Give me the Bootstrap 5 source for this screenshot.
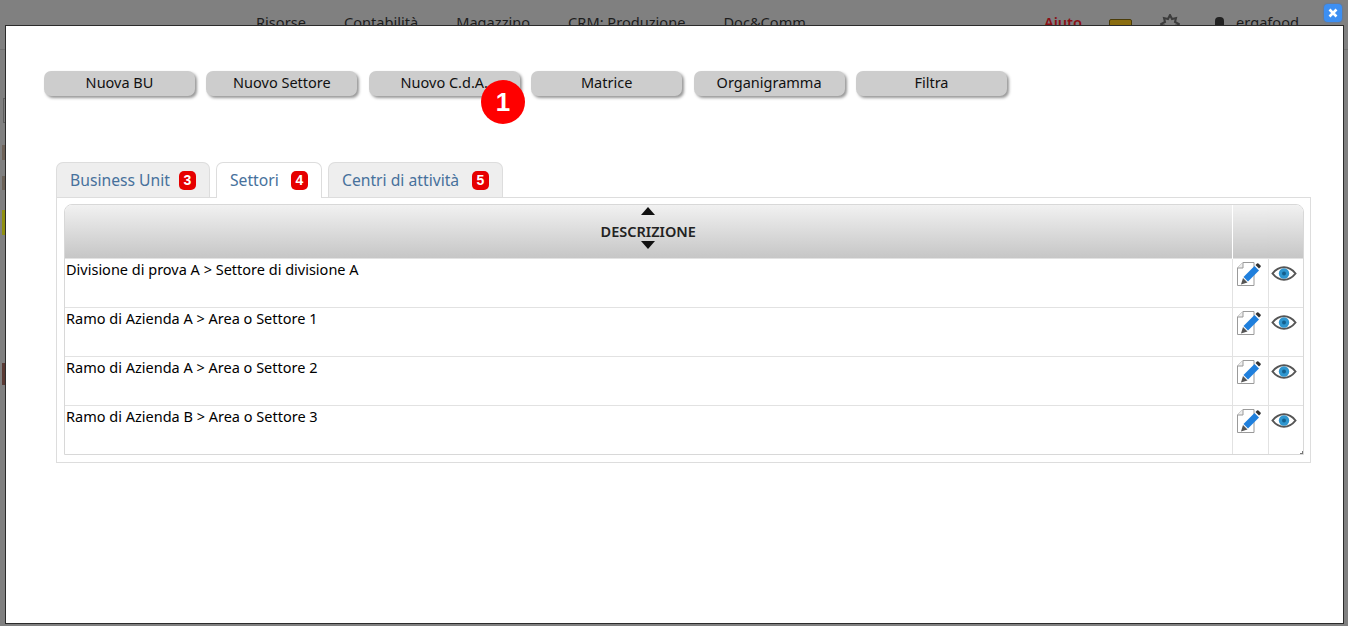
<!doctype html>
<html lang="it">
<head>
  <meta charset="utf-8">
  <meta name="viewport" content="width=device-width, initial-scale=1">
  <title>Settori</title>
  <link href="https://cdn.jsdelivr.net/npm/bootstrap@5.3.0/dist/css/bootstrap.min.css" rel="stylesheet">
  <style>
    html, body { height: 100%; }
    body { background: #808080; overflow: hidden; font-family: "Noto Sans", "Open Sans", sans-serif; font-size: 14.5px; color: #111; position: relative; }
    .back-nav { height: 50px; border-bottom: 1px solid #707070; padding: 12px 49px 0 256px; color: #1d1d1d; font-size: 14.6px; line-height: 21px; white-space: nowrap; }
    .back-link { margin-right: 38px; }
    .back-right { margin-left: auto; }
    .back-help { color: #8a0f14; font-weight: 600; }
    .back-box { width: 23px; height: 16px; background: #8a6d10; border: 1px solid #4a3b08; border-radius: 2px; margin: 7px 0 0 27px; }
    .back-gear { margin: 2px 0 0 28px; }
    .back-user { margin: 5px 12px 0 35px; width: 9px; height: 14px; border-radius: 4px; background: #222; }
    .close-x { position: absolute; left: 1324px; top: 4px; width: 18px; height: 18px; border: 0; padding: 0; background: #3d8ff2; border-radius: 4px; box-shadow: 0 0 2px #2a6fd0; display: flex; align-items: center; justify-content: center; z-index: 3; }
    .dialog-box { position: absolute; left: 5px; top: 25px; width: 1339px; height: 599px; background: #fff; border: 1px solid #2b2b2b; z-index: 2; }
    .tool-bar { padding: 45px 0 0 38px; gap: 11.4px; }
    .tool-btn { width: 151px; height: 25px; padding: 0 0 2px; border: 0; border-radius: 7px; background: #cdcdcd; color: #111; font-size: 14.5px; line-height: 23px; box-shadow: 2px 2px 3px #979797; }
    .step-dot { position: absolute; left: 475px; top: 54px; width: 44px; height: 44px; border-radius: 50%; background: #f00; color: #fff; font: 700 26px/44px "Liberation Sans", sans-serif; text-align: center; }
    .tabs-wrap { margin: 66px 32px 0 50px; }
    .tabs-wrap .nav-tabs { border-bottom: 0; gap: 6px; }
    .tabs-wrap .nav-link { height: 35px; padding: 1px 13px 0; margin: 0; display: flex; align-items: center; justify-content: space-between; color: #47719c; font-size: 15.7px; background: #eee; border: 1px solid #ddd; border-bottom: 0; border-radius: 7px 7px 0 0; }
    .tabs-wrap .nav-link.active { background: #fff; color: #47719c; border-color: #ddd; height: 36px; margin-bottom: -1px; position: relative; z-index: 1; }
    .tab-bu { width: 154px; }
    .tab-set { width: 106px; }
    .tab-cen { width: 175px; }
    .tab-num { width: 17px; height: 19px; margin-top: -1px; background: #e60000; color: #fff; border-radius: 5px; font: 700 14px/19px "Liberation Sans", sans-serif; text-align: center; }
    .tab-panel { border: 1px solid #ddd; height: 266px; padding: 6px 6px 7px 7px; }
    .grid-box { border: 1px solid #d8d8d8; border-radius: 8px 8px 0 0; height: 251px; overflow: hidden; position: relative; }
    .grid-box::after { content: ""; position: absolute; right: 0; bottom: 0; width: 3px; height: 3px; border-right: 1px solid #777; border-bottom: 1px solid #777; }
    .grid-table { width: 100%; table-layout: fixed; border-collapse: collapse; margin: 0; }
    .grid-table th { height: 53px; padding: 0; background: linear-gradient(#f1f1f1, #c6c6c6); text-align: center; vertical-align: top; font-size: 14.5px; font-weight: 600; color: #222; text-transform: uppercase; }
    .grid-table th.col-edit { border-left: 1px solid #fff; }
    .grid-table td { height: 49px; padding: 0 1px; vertical-align: top; border-top: 1px solid #e2e2e2; border-left: 1px solid #e2e2e2; line-height: 20px; color: #000; }
    .grid-table td:first-child { border-left: 0; }
    .grid-table td.icon-cell { padding: 2px 0 0; text-align: center; line-height: 0; }
    .grid-table td.cell-edit { padding-right: 5px; }
    .grid-table td.cell-view { padding-right: 3px; }
    .col-edit { width: 36px; }
    .col-view { width: 35px; }
    .sort-up, .sort-down { width: 0; height: 0; margin: 0 auto; border-left: 7px solid transparent; border-right: 7px solid transparent; }
    .sort-up { border-bottom: 8px solid #111; margin-top: 2px; margin-bottom: 6px; }
    .sort-down { border-top: 8px solid #111; margin-top: 0; }
    .desc-label { line-height: 20px; }
    .back-mark { position: absolute; left: 2px; width: 3px; }
    .back-field { position: absolute; left: 3px; top: 98px; width: 2px; height: 25px; border-left: 1px solid #5d5d5d; border-top: 1px solid #5d5d5d; border-bottom: 1px solid #5d5d5d; }
  </style>
</head>
<body>
  <div class="back-nav d-flex">
    <span class="back-link">Risorse</span><span class="back-link">Contabilità</span><span class="back-link">Magazzino</span><span class="back-link">CRM: Produzione</span><span class="back-link">Doc&amp;Comm</span>
    <div class="back-right d-flex">
      <span class="back-help">Aiuto</span>
      <span class="back-box"></span>
      <svg class="back-gear" width="20" height="20" viewBox="0 0 20 20"><path d="M10 1l2 4 4-1-1 4 4 2-4 2 1 4-4-1-2 4-2-4-4 1 1-4-4-2 4-2-1-4 4 1z" fill="none" stroke="#3c3c3c" stroke-width="2"/></svg>
      <span class="back-user"></span>
      <span>ergafood</span>
    </div>
  </div>
  <div class="back-field"></div>
  <div class="back-mark" style="top:145px;height:15px;background:#6e6258"></div>
  <div class="back-mark" style="top:176px;height:14px;background:#6c6258"></div>
  <div class="back-mark" style="top:210px;height:25px;background:#8f8f10"></div>
  <div class="back-mark" style="top:363px;height:22px;background:#5a3a34"></div>

  <button class="close-x" aria-label="Chiudi">
    <svg width="10" height="10" viewBox="0 0 10 10"><path d="M1.5 1.5l7 7M8.5 1.5l-7 7" stroke="#fff" stroke-width="2.6"/></svg>
  </button>

  <div class="dialog-box">
    <div class="tool-bar d-flex">
      <button class="tool-btn">Nuova BU</button>
      <button class="tool-btn">Nuovo Settore</button>
      <button class="tool-btn">Nuovo C.d.A.</button>
      <button class="tool-btn">Matrice</button>
      <button class="tool-btn">Organigramma</button>
      <button class="tool-btn">Filtra</button>
    </div>
    <div class="step-dot">1</div>

    <div class="tabs-wrap">
      <ul class="nav nav-tabs">
        <li class="nav-item"><a class="nav-link tab-bu" href="#">Business Unit <span class="tab-num">3</span></a></li>
        <li class="nav-item"><a class="nav-link tab-set active" href="#">Settori <span class="tab-num">4</span></a></li>
        <li class="nav-item"><a class="nav-link tab-cen" href="#">Centri di attività <span class="tab-num">5</span></a></li>
      </ul>
      <div class="tab-panel">
        <div class="grid-box">
          <table class="grid-table">
            <thead>
              <tr>
                <th><div class="sort-up"></div><div class="desc-label">Descrizione</div><div class="sort-down"></div></th>
                <th class="col-edit"></th>
                <th class="col-view"></th>
              </tr>
            </thead>
            <tbody id="rows"></tbody>
          </table>
        </div>
      </div>
    </div>
  </div>

<script>
  const RIGHE = [
    'Divisione di prova A > Settore di divisione A',
    'Ramo di Azienda A > Area o Settore 1',
    'Ramo di Azienda A > Area o Settore 2',
    'Ramo di Azienda B > Area o Settore 3'
  ];
  const EDIT_ICON = `<svg width="26" height="26" viewBox="0 0 26 26">
    <path d="M8 1.500h11v23H2.500V7z" fill="#fff" stroke="#9a9a9a" stroke-width="1"/>
    <path d="M8 1.500V7H2.500" fill="#eee" stroke="#9a9a9a" stroke-width="1"/>
    <path d="M19.500 5l4.500 4.500L13 20.500 8.500 16z" fill="#1f7fdc"/>
    <path d="M20.500 4l1.500-1.500a1 1 0 0 1 1.400 0l2.100 2.100a1 1 0 0 1 0 1.400L24 7.500z" fill="#333"/>
    <path d="M8 17l4.500 4.500-6.500 2z" fill="#555"/>
  </svg>`;
  const VIEW_ICON = `<svg width="26" height="26" viewBox="0 0 26 26">
    <path d="M1.500 12.500C5 8 9 6.300 13 6.300s8 1.700 11.500 6.200C21 17 17 18.700 13 18.700S5 17 1.500 12.500z" fill="#fff" stroke="#555" stroke-width="2"/>
    <circle cx="13" cy="12.500" r="5.200" fill="#2f96cf"/>
    <circle cx="13" cy="12.500" r="2" fill="#14608e"/>
  </svg>`;
  document.getElementById('rows').innerHTML = RIGHE.map(r => `<tr>
    <td></td>
    <td class="icon-cell cell-edit">${EDIT_ICON}</td>
    <td class="icon-cell cell-view">${VIEW_ICON}</td>
  </tr>`).join('');
  document.querySelectorAll('#rows tr').forEach((tr, i) => { tr.firstElementChild.textContent = RIGHE[i]; });
</script>
<script src="https://cdn.jsdelivr.net/npm/bootstrap@5.3.0/dist/js/bootstrap.bundle.min.js"></script>
</body>
</html>
